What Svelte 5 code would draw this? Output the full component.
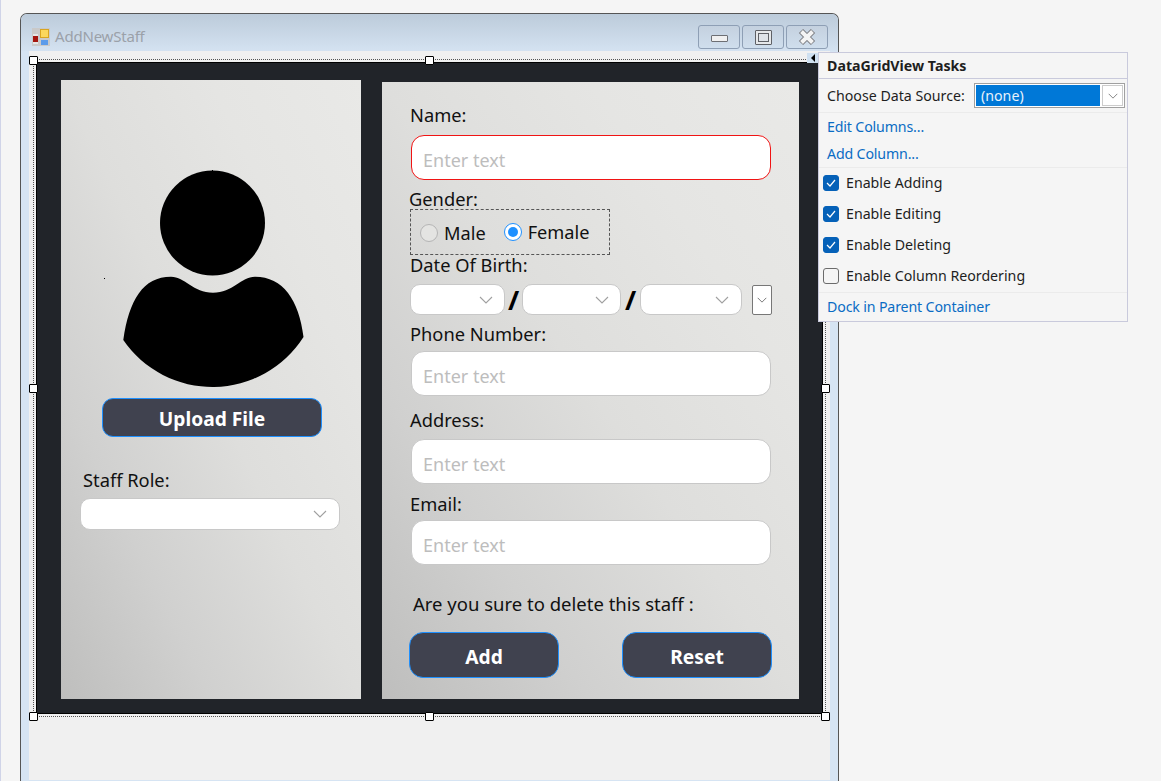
<script>
  const fields = [
    { label: "Phone Number:", cls: "phone" },
    { label: "Address:", cls: "address" },
    { label: "Email:", cls: "email" }
  ];
  const options = [
    { label: "Enable Adding", checked: true },
    { label: "Enable Editing", checked: true },
    { label: "Enable Deleting", checked: true },
    { label: "Enable Column Reordering", checked: false }
  ];
  const handles = [
    [0, 0], [396, 0], [0, 328], [792, 328], [0, 656], [396, 656], [792, 656]
  ];
</script>

{#snippet chevron(w = 14, h = 8, color = "#a0a0a0")}
  <svg class="chev" width={w} height={h} viewBox="0 0 14 8"><path d="M1 1l6 6 6-6" fill="none" stroke={color} stroke-width="1.1" /></svg>
{/snippet}

<div class="screen">
  <div class="window">
    <div class="titlebar">
      <svg class="appicon" width="18" height="18" viewBox="0 0 18 18">
        <rect width="18" height="18" fill="#c9c9c9" />
        <rect x="1" y="6" width="5" height="10" fill="#e6e6e6" />
        <rect x="1" y="8" width="5" height="6" fill="#a5160f" />
        <rect x="8" y="1" width="9" height="9" fill="#d9a520" />
        <rect x="9" y="2" width="7" height="7" fill="#fbd75b" />
        <rect x="9" y="12" width="7" height="5" fill="#5b9bea" />
      </svg>
      <span class="title">AddNewStaff</span>
      <div class="winbtns">
        <div class="winbtn"><span class="min"></span></div>
        <div class="winbtn"><span class="max"></span></div>
        <div class="winbtn">
          <svg width="20" height="18" viewBox="0 0 20 18">
            <path d="M4 3l12 12M16 3L4 15" fill="none" stroke="#77787c" stroke-width="6" />
            <path d="M4.500 3.500l11 11M15.500 3.500l-11 11" fill="none" stroke="#f4f4f4" stroke-width="4" />
          </svg>
        </div>
      </div>
    </div>

    <div class="client">
      <div class="form">
        <div class="panel left">
          <svg class="avatar" width="182" height="217" viewBox="0 0 182 217">
            <circle cx="89.500" cy="53" r="52.500" />
            <rect x="89" y="0" width="1" height="1" />
            <rect x="-19" y="108" width="1" height="1" />
            <path d="M.3 170C6 130 20 106.700 48 106.700 62 106.700 70 122.700 90 122.700S118 106.700 132 106.700C160 106.700 176 130 180.500 167A108 108 0 0 1 .3 170z" />
          </svg>
          <button class="action upload">Upload File</button>
          <div class="label role">Staff Role:</div>
          <div class="select rolesel">{@render chevron()}</div>
        </div>

        <div class="panel right">
          <div class="label name">Name:</div>
          <div class="input invalid name-in">Enter text</div>
          <div class="label gender">Gender:</div>
          <div class="radios">
            <span class="radio"></span><span class="rlabel male">Male</span>
            <span class="radio on"></span><span class="rlabel">Female</span>
          </div>
          <div class="label dob">Date Of Birth:</div>
          <div class="daterow">
            <div class="select d1">{@render chevron()}</div>
            <span class="slash s1">/</span>
            <div class="select d2">{@render chevron()}</div>
            <span class="slash s2">/</span>
            <div class="select d3">{@render chevron()}</div>
            <div class="datedrop">{@render chevron(10, 6, "#555")}</div>
          </div>
          {#each fields as f}
            <div class="label {f.cls}">{f.label}</div>
            <div class="input {f.cls}-in">Enter text</div>
          {/each}
          <div class="label confirm">Are you sure to delete this staff :</div>
          <div class="actions">
            <button class="action big">Add</button>
            <button class="action big">Reset</button>
          </div>
        </div>
      </div>

      <div class="selection"></div>
      {#each handles as h}
        <span class="handle" style="left:{h[0]}px;top:{h[1]}px"></span>
      {/each}
    </div>
  </div>

  <div class="smarttag"><span></span></div>

  <div class="tasks">
    <div class="taskhead">DataGridView Tasks</div>
    <div class="dsrow">
      <span>Choose Data Source:</span>
      <div class="dsdrop">
        <div class="dsval">(none)</div>
        <div class="dsbtn">{@render chevron(10, 6, "#666")}</div>
      </div>
    </div>
    <div class="links">
      <div class="tlink">Edit Columns...</div>
      <div class="tlink">Add Column...</div>
    </div>
    <div class="checks">
      {#each options as o}
        <div class="check">
          <span class="box" class:on={o.checked}>
            {#if o.checked}
              <svg width="10" height="8" viewBox="0 0 10 8"><path d="M1 4l3 3 5-6" fill="none" stroke="#fff" stroke-width="1.200" /></svg>
            {/if}
          </span>
          {o.label}
        </div>
      {/each}
    </div>
    <div class="tlink dock">Dock in Parent Container</div>
  </div>
</div>

<style>
  :global(body) {
    margin: 0;
    background: #f5f5f5;
  }

  .screen {
    position: relative;
    width: 1161px;
    height: 781px;
    overflow: hidden;
    box-sizing: border-box;
    padding: 13px 0 0 19px;
    border-left: 1px solid #d0d4e8;
    font-family: "Noto Sans", "Open Sans", sans-serif;
    color: #111;
  }

  .window {
    width: 819px;
    height: 768px;
    box-sizing: border-box;
    background: #d6e4f3;
    border: 1px solid #555;
    border-bottom: none;
    border-radius: 7px 7px 0 0;
  }

  .titlebar {
    display: flex;
    align-items: center;
    height: 37px;
    padding: 0 10px 0 11px;
    border-radius: 6px 6px 0 0;
    background: linear-gradient(#bccbda, #d4e2f1);
  }

  .appicon {
    margin-top: 8px;
  }

  .title {
    margin: 7px 0 0 5px;
    font-size: 15px;
    color: #9ba1a9;
    letter-spacing: -0.2px;
  }

  .winbtns {
    display: flex;
    gap: 2px;
    margin: 9px 0 0 auto;
  }

  .winbtn {
    display: flex;
    align-items: center;
    justify-content: center;
    width: 42px;
    height: 24px;
    box-sizing: border-box;
    border: 1px solid #8e9fb5;
    border-radius: 3px;
    background: linear-gradient(#c4d1df, #cfdeed);
  }

  .min {
    width: 17px;
    height: 7px;
    box-sizing: border-box;
    margin-top: 3px;
    background: #f0f0f0;
    border: 1px solid #6d6f74;
    border-radius: 1px;
  }

  .max {
    width: 17px;
    height: 15px;
    box-sizing: border-box;
    background: #dfe3e8;
    border: 1px solid #5f6166;
    border-radius: 1px;
    box-shadow: inset 0 0 0 2px #e6e8ea, inset 0 0 0 3px #5f6166;
  }

  .client {
    position: relative;
    height: 729px;
    box-sizing: border-box;
    margin: 0 8px;
    padding: 11px 0 0 7px;
    background: #f0f0f0;
  }

  .form {
    display: flex;
    align-items: flex-start;
    width: 787px;
    height: 652px;
    box-sizing: border-box;
    border: 1px solid #000;
    background: #212429;
  }

  .panel {
    box-sizing: border-box;
    background: linear-gradient(to top right, #bebebd, #d0d0cf 25%, #dededc 50%, #e5e5e3 75%, #e9e9e7);
  }

  .left {
    width: 300px;
    height: 619px;
    margin: 17px 0 0 24px;
    padding-top: 90px;
  }

  .right {
    width: 417px;
    height: 617px;
    margin: 19px 0 0 21px;
    padding-left: 28px;
  }

  .avatar {
    display: block;
    margin-left: 62px;
    overflow: visible;
  }

  .label {
    font-size: 18.300px;
    line-height: 20px;
    color: #111;
    white-space: nowrap;
  }

  .role { margin: 33px 0 0 22px; }
  .name { margin-top: 23px; }
  .gender { margin-top: 9px; margin-left: -1px; }
  .phone { margin-top: 9px; }
  .address { margin-top: 14px; }
  .email { margin-top: 10px; }
  .confirm { margin: 29px 0 0 3px; font-size: 18.500px; }

  .input {
    display: flex;
    align-items: center;
    width: 360px;
    height: 45px;
    box-sizing: border-box;
    margin-left: 1px;
    padding: 5px 0 0 11px;
    background: #fff;
    border: 1px solid #c8c8c8;
    border-radius: 13px;
    font-size: 18px;
    color: #bdbdbd;
  }

  .invalid { border-color: #f01414; }
  .name-in { margin-top: 10px; }
  .phone-in { margin-top: 7px; }
  .address-in { margin-top: 9px; }
  .email-in { margin-top: 6px; }

  .radios {
    display: flex;
    align-items: center;
    width: 200px;
    height: 46px;
    box-sizing: border-box;
    padding: 2px 0 0 9px;
    border: 1px dashed #555;
  }

  .radio {
    position: relative;
    flex: none;
    width: 18px;
    height: 18px;
    box-sizing: border-box;
    border: 1px solid #b5b5b5;
    border-radius: 50%;
    background: #e4e4e2;
  }

  .radio.on {
    margin-top: -2px;
    border-color: #1e90ff;
    background: #fff;
  }

  .radio.on::after {
    content: "";
    position: absolute;
    inset: 3px;
    border-radius: 50%;
    background: #1e90ff;
  }

  .rlabel {
    margin: -2px 0 0 6px;
    font-size: 18.200px;
  }

  .male {
    margin: 0 18px 0 6px;
  }

  .daterow {
    display: flex;
    align-items: flex-start;
    margin-top: 9px;
  }

  .select {
    display: flex;
    align-items: center;
    justify-content: flex-end;
    height: 31px;
    box-sizing: border-box;
    padding-right: 12px;
    background: #fff;
    border: 1px solid #c8c8c8;
    border-radius: 10px;
  }

  .d1 { width: 95px; padding-right: 11px; }
  .d2 { width: 99px; padding-right: 11px; }
  .d3 { width: 102px; }

  .rolesel {
    width: 260px;
    height: 32px;
    margin: 8px 0 0 19px;
  }

  .chev {
    display: block;
  }

  .slash {
    font-size: 27px;
    line-height: 31px;
    font-weight: 700;
    text-align: center;
    color: #000;
  }

  .s1 { width: 17px; }
  .s2 { width: 19px; }

  .datedrop {
    display: flex;
    align-items: center;
    justify-content: center;
    width: 20px;
    height: 30px;
    box-sizing: border-box;
    margin: 1px 0 0 10px;
    background: #fff;
    border: 1px solid #777;
    border-radius: 2px;
  }

  .actions {
    display: flex;
    justify-content: space-between;
    width: 363px;
    margin: 18px 0 0 -1px;
  }

  .action {
    display: block;
    box-sizing: border-box;
    padding: 1px 0 0;
    background: #40424f;
    border: 1px solid #1e90ff;
    color: #fff;
    font: 700 19.200px "Noto Sans", "Open Sans", sans-serif;
  }

  .upload {
    width: 220px;
    height: 39px;
    margin: 11px 0 0 41px;
    border-radius: 11px;
  }

  .big {
    width: 150px;
    height: 46px;
    padding-top: 3px;
    border-radius: 14px;
  }

  .selection {
    position: absolute;
    left: 4px;
    top: 8px;
    width: 793px;
    height: 658px;
    box-sizing: border-box;
    border: 1px dotted #555;
    pointer-events: none;
  }

  .handle {
    position: absolute;
    width: 9px;
    height: 9px;
    margin: 5px 0 0 0;
    box-sizing: border-box;
    background: #fff;
    border: 1px solid #000;
    border-radius: 1px;
  }

  .smarttag {
    position: absolute;
    left: 806px;
    top: 53px;
    display: flex;
    align-items: center;
    justify-content: center;
    width: 11px;
    height: 10px;
    background: #cfe0f0;
  }

  .smarttag span {
    width: 0;
    height: 0;
    border: 4px solid transparent;
    border-left: 0;
    border-right: 4px solid #000;
  }

  .tasks {
    position: absolute;
    left: 817px;
    top: 52px;
    width: 310px;
    height: 270px;
    box-sizing: border-box;
    background: #f5f5f5;
    border: 1px solid #c9cadc;
    font-size: 14.200px;
    color: #1e1e1e;
  }

  .taskhead {
    display: flex;
    align-items: center;
    height: 26px;
    box-sizing: border-box;
    padding-left: 8px;
    border-bottom: 1px solid #c9cadc;
    font-weight: 700;
  }

  .dsrow {
    display: flex;
    align-items: center;
    height: 34px;
    box-sizing: border-box;
    padding-left: 8px;
    border-bottom: 1px solid #ebebeb;
  }

  .dsdrop {
    position: absolute;
    left: 155px;
    top: 30px;
    display: flex;
    justify-content: space-between;
    width: 151px;
    height: 25px;
    box-sizing: border-box;
    padding: 1px;
    background: #fff;
    border: 1px solid #a0a0a0;
  }

  .dsval {
    width: 124px;
    padding-left: 5px;
    box-sizing: border-box;
    background: #0078d7;
    color: #e8f2fb;
    line-height: 21px;
  }

  .dsbtn {
    display: flex;
    align-items: center;
    justify-content: center;
    width: 21px;
    box-sizing: border-box;
    border: 1px solid #ccc;
  }

  .links {
    height: 55px;
    box-sizing: border-box;
    border-bottom: 1px solid #ebebeb;
  }

  .tlink {
    display: flex;
    align-items: center;
    height: 27px;
    padding-left: 8px;
    color: #0a6cc4;
    letter-spacing: -0.15px;
  }

  .checks {
    height: 125px;
    box-sizing: border-box;
    border-bottom: 1px solid #ebebeb;
  }

  .check {
    display: flex;
    align-items: center;
    gap: 7px;
    height: 31px;
    box-sizing: border-box;
    padding: 0 0 2px 4px;
  }

  .box {
    display: flex;
    align-items: center;
    justify-content: center;
    width: 16px;
    height: 16px;
    box-sizing: border-box;
    border: 1px solid #6b6b6b;
    border-radius: 3px;
  }

  .box.on {
    background: #0561b8;
    border-color: #0561b8;
  }

  .dock {
    height: 28px;
    box-sizing: border-box;
    padding-bottom: 2px;
  }
</style>
